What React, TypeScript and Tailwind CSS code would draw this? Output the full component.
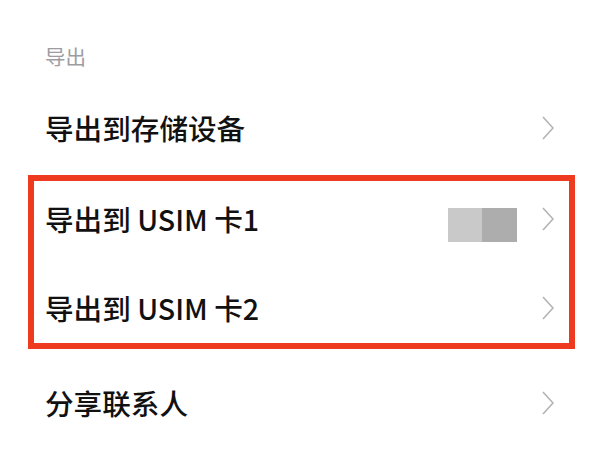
import React from "react";

const font = { fontFamily: '"Noto Sans CJK SC", "Noto Sans", sans-serif' };

function Chevron() {
  return (
    <svg width="12" height="24" viewBox="0 0 12 24" fill="none" className="shrink-0">
      <path d="M1 1 L11 12 L1 23" stroke="#b3b3b3" strokeWidth="1.6" strokeLinejoin="miter" />
    </svg>
  );
}

function Row({ label, h, extra }: { label: string; h: string; extra?: React.ReactNode }) {
  return (
    <div className={`flex items-center justify-between ${h}`}>
      <span className="text-[28.6px] leading-none font-medium text-[#111]">{label}</span>
      <div className="flex items-center gap-[25px]">
        {extra}
        <Chevron />
      </div>
    </div>
  );
}

export default function App() {
  return (
    <div className="w-[600px] h-[450px] bg-white overflow-hidden pl-[28px] pr-[25px]" style={font}>
      <div className="h-[83px] flex items-end pl-[17px] pb-[17px]">
        <span className="text-[20.5px] leading-none text-[#9c9ca2]">导出</span>
      </div>
      <div className="pl-[17px] pr-[21px]">
        <Row label="导出到存储设备" h="h-[90px]" />
      </div>
      <div className="mt-[2px] border-[6px] border-[#ee3a1f] h-[174px] flex flex-col justify-between pl-[11px] pr-[15px]">
        <Row
          label="导出到 USIM 卡1"
          h="h-[76px]"
          extra={
            <div className="flex mt-[12px]">
              <div className="w-[34px] h-[34px] bg-[#c9c9c9]" />
              <div className="w-[35px] h-[34px] bg-[#adadad]" />
            </div>
          }
        />
        <Row label="导出到 USIM 卡2" h="h-[70px]" />
      </div>
      <div className="pl-[17px] pr-[21px]">
        <Row label="分享联系人" h="h-[108px]" />
      </div>
    </div>
  );
}
